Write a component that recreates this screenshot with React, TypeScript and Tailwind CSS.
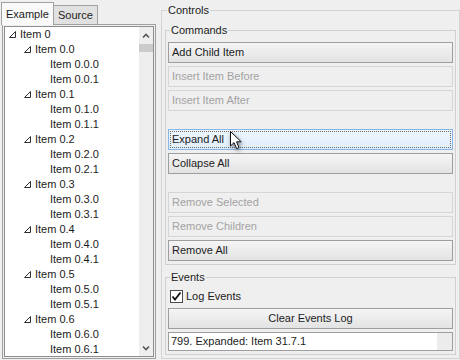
import type React from "react";

interface TreeNode {
  label: string;
  level: number;
  expanded?: boolean;
}

const buildRows = (): TreeNode[] => {
  const rows: TreeNode[] = [{ label: "Item 0", level: 0, expanded: true }];
  for (let i = 0; i < 7; i++) {
    rows.push({ label: `Item 0.${i}`, level: 1, expanded: true });
    for (let j = 0; j < 2; j++) {
      rows.push({ label: `Item 0.${i}.${j}`, level: 2 });
    }
  }
  return rows;
};

const ROWS = buildRows();

function Expander() {
  return (
    <svg className="block" height="7" viewBox="0 0 7 7" width="7">
      <path d="M0.5 6.5 H6.5 V0.5 Z" fill="none" stroke="#2e2e2e" strokeWidth="1" />
    </svg>
  );
}

function TreeRow({ node }: { node: TreeNode }) {
  return (
    <div
      className="flex h-[15px] items-center whitespace-nowrap"
      style={{ paddingLeft: node.level * 15 }}
    >
      <div className="flex h-[15px] w-[15px] items-center justify-center pb-[1px]">
        {node.expanded && <Expander />}
      </div>
      <span>{node.label}</span>
    </div>
  );
}

function Chevron({ up }: { up?: boolean }) {
  return (
    <svg height="6" viewBox="0 0 8 6" width="8">
      <path
        d={up ? "M1 4.5 L4 1.5 L7 4.5" : "M1 1.5 L4 4.5 L7 1.5"}
        fill="none"
        stroke="#555"
        strokeWidth="1.6"
      />
    </svg>
  );
}

type BtnKind = "normal" | "disabled" | "hover";

function PushButton({
  children,
  kind = "normal",
  center = false,
  className = "",
}: {
  children: React.ReactNode;
  kind?: BtnKind;
  center?: boolean;
  className?: string;
}) {
  const skin =
    kind === "disabled"
      ? "border-[#d6d6d6] bg-[#efefef] text-[#a3a3a3]"
      : kind === "hover"
        ? "border-[#86b7e6] bg-linear-to-b from-[#eef6fd] to-[#dfeefc] text-[#1c1c1c]"
        : "border-[#9e9e9e] bg-linear-to-b from-[#f5f5f5] to-[#e3e3e3] text-[#1c1c1c]";
  return (
    <div
      className={`relative flex h-[21px] items-center border px-[3px] ${skin} ${
        center ? "justify-center" : ""
      } ${className}`}
    >
      {kind === "hover" && (
        <div className="pointer-events-none absolute inset-[1px] border border-dotted border-[#6b6b6b]" />
      )}
      <span>{children}</span>
    </div>
  );
}

function Cursor() {
  return (
    <svg
      className="pointer-events-none absolute top-[131px] left-[230px] drop-shadow-[1px_2px_2px_rgba(0,0,0,0.45)]"
      height="20"
      viewBox="0 0 13 20"
      width="13"
    >
      <path
        d="M0.5 0.5 L0.5 15 L4 11.6 L6.6 17.6 L9 16.6 L6.5 10.8 L11.2 10.8 Z"
        fill="#fff"
        stroke="#111"
        strokeLinejoin="round"
        strokeWidth="1"
      />
    </svg>
  );
}

export default function App() {
  return (
    <div className="relative flex h-[360px] w-[460px] overflow-hidden bg-[#efefef] pl-[1px] font-['Liberation_Sans',Arial,sans-serif] text-[11px] text-[#1c1c1c]">
      {/* Left: tabs with tree */}
      <div className="flex w-[155px] flex-col pb-[1px]">
        <div className="flex h-[24px] items-end">
          <div className="z-10 -mb-[1px] flex h-[23px] w-[53px] items-center border border-b-0 border-[#a2a2a2] bg-[#f9f9f9] pl-[4px]">
            Example
          </div>
          <div className="flex h-[19px] w-[44px] items-center border border-l-0 border-b-0 border-[#a2a2a2] bg-[#e1e1e1] pl-[4px]">
            Source
          </div>
        </div>
        <div className="ml-[1px] flex min-h-0 flex-1 border border-[#a0a0a0] p-[1px]">
          <div className="flex min-h-0 flex-1 border border-[#8f8f8f] bg-white">
            <div className="min-h-0 flex-1 overflow-hidden">
              {ROWS.map((node) => (
                <TreeRow key={node.label} node={node} />
              ))}
            </div>
            <div className="flex w-[14px] flex-col items-center bg-[#eeeeee]">
              <div className="flex h-[17px] items-center justify-center pt-[1px]">
                <Chevron up />
              </div>
              <div className="h-[8px] w-full bg-[#cbcbcb]" />
              <div className="flex-1" />
              <div className="flex h-[16px] items-center justify-center">
                <Chevron />
              </div>
            </div>
          </div>
        </div>
      </div>

      {/* Right: controls */}
      <div className="ml-[5px] flex flex-1 flex-col pt-[4px] pb-[1px]">
        <fieldset className="flex min-h-0 flex-1 flex-col border border-[#d4d4d4] px-[3px] pb-[3px]">
          <legend className="ml-[2px] px-[1px] leading-[13px]">Controls</legend>
          <fieldset className="mt-[7px] border border-[#d0d0d0] px-[2px] pt-[5px] pb-[3px]">
            <legend className="ml-[2px] px-[1px] leading-[13px]">Commands</legend>
            <div className="flex flex-col gap-[3px]">
              <PushButton>Add Child Item</PushButton>
              <PushButton kind="disabled">Insert Item Before</PushButton>
              <PushButton kind="disabled">Insert Item After</PushButton>
              <PushButton className="mt-[15px]" kind="hover">
                Expand All
              </PushButton>
              <PushButton>Collapse All</PushButton>
              <PushButton className="mt-[15px]" kind="disabled">
                Remove Selected
              </PushButton>
              <PushButton kind="disabled">Remove Children</PushButton>
              <PushButton>Remove All</PushButton>
            </div>
          </fieldset>
          <fieldset className="mt-[6px] flex-1 border border-[#d0d0d0] px-[2px] pt-[4px] pb-[3px]">
            <legend className="ml-[2px] px-[1px] leading-[13px]">Events</legend>
            <div className="flex flex-col gap-[3px]">
              <div className="flex h-[17px] items-center gap-[3px] pl-[2px]">
                <div className="flex h-[13px] w-[13px] items-center justify-center border border-[#4a4a4a] bg-white">
                  <svg height="11" viewBox="0 0 11 11" width="11">
                    <path
                      d="M1.5 5.5 L4 8.5 L9.5 1.5"
                      fill="none"
                      stroke="#111"
                      strokeWidth="1.8"
                    />
                  </svg>
                </div>
                <span>Log Events</span>
              </div>
              <PushButton center>Clear Events Log</PushButton>
              <div className="flex h-[19px] border border-[#9e9e9e] bg-white">
                <div className="flex flex-1 items-center pl-[2px] whitespace-nowrap">
                  799. Expanded: Item 31.7.1
                </div>
                <div className="w-[15px] bg-[#ececec]" />
              </div>
            </div>
          </fieldset>
        </fieldset>
      </div>

      <Cursor />
    </div>
  );
}
